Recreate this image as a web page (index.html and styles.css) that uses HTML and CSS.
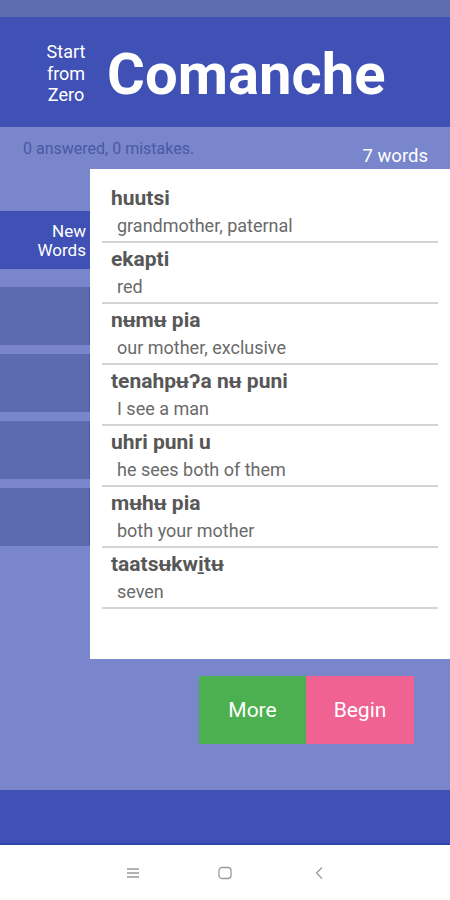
FILE: index.html
```html
<!DOCTYPE html>
<html lang="en">
<head>
    <meta charset="UTF-8">
    <title>Start from Zero Comanche</title>
    <link rel="stylesheet" href="styles.css">
</head>
<body>
    <div class="status-bar"></div>

    <div class="header">
        <div class="tagline">Start<br>from<br>Zero</div>
        <h1>Comanche</h1>
    </div>

    <div class="main">
        <div class="stats">
            <span class="score">0 answered, 0 mistakes.</span>
            <span class="count">7 words</span>
        </div>

        <div class="body">
            <div class="tabs">
                <div class="tab active">New<br>Words</div>
                <div class="tab"></div>
                <div class="tab"></div>
                <div class="tab"></div>
                <div class="tab"></div>
            </div>

            <div class="card">
                <div class="word">
                    <div class="term">huutsi</div>
                    <div class="meaning">grandmother, paternal</div>
                </div>
                <div class="word">
                    <div class="term">ekapti</div>
                    <div class="meaning">red</div>
                </div>
                <div class="word">
                    <div class="term">nʉmʉ pia</div>
                    <div class="meaning">our mother, exclusive</div>
                </div>
                <div class="word">
                    <div class="term">tenahpʉʔa nʉ puni</div>
                    <div class="meaning">I see a man</div>
                </div>
                <div class="word">
                    <div class="term">uhri puni u</div>
                    <div class="meaning">he sees both of them</div>
                </div>
                <div class="word">
                    <div class="term">mʉhʉ pia</div>
                    <div class="meaning">both your mother</div>
                </div>
                <div class="word">
                    <div class="term">taatsʉkwi̱tʉ</div>
                    <div class="meaning">seven</div>
                </div>
            </div>
        </div>

        <div class="actions">
            <button class="btn more">More</button>
            <button class="btn begin">Begin</button>
        </div>
    </div>

    <div class="bottom-bar"></div>

    <div class="nav-bar">
        <svg width="16" height="14" viewBox="0 0 16 14"><path d="M2 3h12M2 7h12M2 11h12" stroke="#9a9a9a" stroke-width="1.3" fill="none"/></svg>
        <svg width="16" height="14" viewBox="0 0 16 14"><rect x="2" y="1.5" width="12" height="11" rx="3" stroke="#9a9a9a" stroke-width="1.3" fill="none"/></svg>
        <svg width="16" height="14" viewBox="0 0 16 14"><path d="M10 1.5L4.5 7 10 12.5" stroke="#9a9a9a" stroke-width="1.3" fill="none"/></svg>
    </div>
</body>
</html>
```

FILE: styles.css
```css
body {
    margin: 0;
    width: 450px;
    font-family: Roboto, "Liberation Sans", sans-serif;
    background-color: #7986cb;
}

.status-bar {
    height: 17px;
    background-color: #5e6cb0;
}

.header {
    height: 110px;
    background-color: #3f51b5;
    display: flex;
    align-items: center;
    color: white;
}

.tagline {
    width: 70px;
    margin-left: 31px;
    text-align: center;
    font-size: 18px;
    line-height: 21.5px;
    margin-top: 3px;
}

.header h1 {
    margin: 0 0 0 6px;
    font-size: 58px;
    font-weight: bold;
    line-height: 1;
    margin-top: 4px;
}

.main {
    height: 663px;
    background-color: #7986cb;
}

.stats {
    height: 42px;
    display: flex;
    justify-content: space-between;
    padding: 0 22px 0 23px;
}

.score {
    margin-top: 12px;
    font-size: 16px;
    line-height: 20px;
    color: #4a58a6;
}

.count {
    align-self: flex-end;
    margin-bottom: 1px;
    font-size: 18.5px;
    line-height: 24px;
    color: white;
}

.body {
    display: flex;
    height: 490px;
}

.tabs {
    width: 90px;
    padding-top: 42px;
}

.tab {
    height: 58px;
    margin-bottom: 9px;
    background-color: #5c6bb0;
    border-right: 1px solid #4c5ca8;
    box-sizing: border-box;
}

.tab.active {
    margin-bottom: 18px;
    background-color: #3f51b5;
    color: white;
    text-align: right;
    font-size: 17px;
    line-height: 19px;
    padding: 11px 4px 0 0;
    border-right: none;
}

.card {
    flex: 1;
    background-color: white;
    padding-top: 13px;
}

.word {
    margin: 0 12px;
    padding: 4px 0 3px 9px;
    border-bottom: 2px solid #d4d4d4;
}

.term {
    font-size: 21px;
    font-weight: bold;
    line-height: 24px;
    color: #575757;
}

.meaning {
    margin-top: 4px;
    padding-left: 6px;
    font-size: 18px;
    line-height: 24px;
    color: #6a6a6a;
}

.actions {
    display: flex;
    justify-content: flex-end;
    padding: 17px 36px 0 0;
}

.btn {
    width: 107px;
    height: 68px;
    border: none;
    color: white;
    font-family: Roboto, "Liberation Sans", sans-serif;
    font-size: 21px;
}

.btn.more {
    background-color: #4caf50;
}

.btn.begin {
    width: 108px;
    background-color: #f06292;
}

.bottom-bar {
    height: 53px;
    background-color: #3f51b5;
    border-bottom: 2px solid #2f44ad;
}

.nav-bar {
    height: 55px;
    background-color: white;
    display: flex;
    align-items: center;
    padding-left: 125px;
    gap: 76px;
}

.nav-bar svg:last-child {
    margin-left: 3px;
}
```
